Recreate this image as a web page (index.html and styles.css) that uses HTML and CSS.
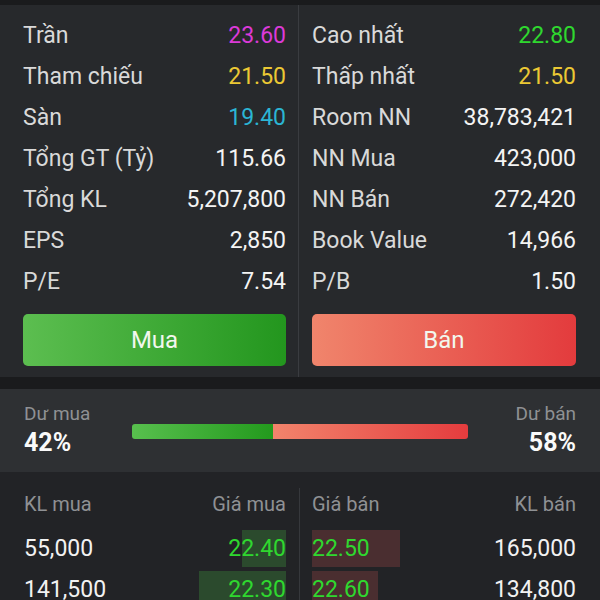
FILE: index.html
```html
<!DOCTYPE html>
<html>
<meta charset="utf-8">
<head>
  <link rel="stylesheet" href="styles.css">
</head>
<body>
  <div class="stats">
    <div class="stats-col left">
      <div class="row"><span>Trần</span><span class="ceil">23.60</span></div>
      <div class="row"><span>Tham chiếu</span><span class="ref">21.50</span></div>
      <div class="row"><span>Sàn</span><span class="floor">19.40</span></div>
      <div class="row"><span>Tổng GT (Tỷ)</span><span class="val">115.66</span></div>
      <div class="row"><span>Tổng KL</span><span class="val">5,207,800</span></div>
      <div class="row"><span>EPS</span><span class="val">2,850</span></div>
      <div class="row"><span>P/E</span><span class="val">7.54</span></div>
      <button class="btn btn-buy">Mua</button>
    </div>
    <div class="stats-col right">
      <div class="row"><span>Cao nhất</span><span class="up">22.80</span></div>
      <div class="row"><span>Thấp nhất</span><span class="ref">21.50</span></div>
      <div class="row"><span>Room NN</span><span class="val">38,783,421</span></div>
      <div class="row"><span>NN Mua</span><span class="val">423,000</span></div>
      <div class="row"><span>NN Bán</span><span class="val">272,420</span></div>
      <div class="row"><span>Book Value</span><span class="val">14,966</span></div>
      <div class="row"><span>P/B</span><span class="val">1.50</span></div>
      <button class="btn btn-sell">Bán</button>
    </div>
  </div>

  <div class="balance">
    <div class="side">
      <div class="side-label">Dư mua</div>
      <div class="side-pct">42%</div>
    </div>
    <div class="bar">
      <div class="bar-buy" style="width: 42%"></div>
      <div class="bar-sell"></div>
    </div>
    <div class="side side-right">
      <div class="side-label">Dư bán</div>
      <div class="side-pct">58%</div>
    </div>
  </div>

  <div class="book">
    <div class="book-col buy">
      <div class="book-head"><span>KL mua</span><span>Giá mua</span></div>
      <div class="book-row">
        <span class="qty">55,000</span>
        <span class="price"><i class="depth" style="width: 44px"></i><b>22.40</b></span>
      </div>
      <div class="book-row">
        <span class="qty">141,500</span>
        <span class="price"><i class="depth" style="width: 87px"></i><b>22.30</b></span>
      </div>
    </div>
    <div class="book-col sell">
      <div class="book-head"><span>Giá bán</span><span>KL bán</span></div>
      <div class="book-row">
        <span class="price"><i class="depth" style="width: 88px"></i><b>22.50</b></span>
        <span class="qty">165,000</span>
      </div>
      <div class="book-row">
        <span class="price"><i class="depth" style="width: 66px"></i><b>22.60</b></span>
        <span class="qty">134,800</span>
      </div>
    </div>
  </div>
</body>
</html>
```

FILE: styles.css
```css
body {
  margin: 0;
  padding-top: 5px;
  height: 600px;
  box-sizing: border-box;
  background-color: #1a1b1d;
  font-family: Roboto, "Noto Sans", sans-serif;
  color: #f2f2f2;
  overflow: hidden;
  display: flex;
  flex-direction: column;
}

.stats {
  display: grid;
  grid-template-columns: 299px 1fr;
  background-color: #27292c;
}

.stats-col {
  display: flex;
  flex-direction: column;
  padding: 10px 0 11px;
}

.stats-col.left {
  padding-left: 23px;
  padding-right: 12px;
  border-right: 1px solid #3a3c40;
}

.stats-col.right {
  padding-left: 13px;
  padding-right: 24px;
}

.row {
  display: flex;
  justify-content: space-between;
  align-items: center;
  height: 41px;
  font-size: 23px;
  color: #d9d9d9;
}

.row .val {
  color: #f4f4f4;
}

.ceil {
  color: #db3ad8;
}

.ref {
  color: #ebc834;
}

.floor {
  color: #2bb5d4;
}

.up {
  color: #2fd82f;
}

.btn {
  -webkit-appearance: none;
  appearance: none;
  border: none;
  border-radius: 5px;
  margin-top: 12px;
  height: 52px;
  font-family: inherit;
  font-size: 24px;
  color: #f2f7ee;
  cursor: pointer;
}

.btn-buy {
  background: linear-gradient(to right, #5cbe50, #23961e);
}

.btn-sell {
  background: linear-gradient(to right, #f0856c, #e33b3d);
}

.balance {
  margin-top: 12px;
  display: flex;
  align-items: center;
  flex: 0 0 83px;
  padding: 0 24px;
  box-sizing: border-box;
  background-color: #2e3033;
}

.side {
  width: 108px;
}

.side-right {
  text-align: right;
}

.side-label {
  font-size: 19px;
  color: #8f9194;
  line-height: 24px;
}

.side-pct {
  font-size: 25px;
  font-weight: bold;
  color: #fafafa;
  line-height: 34px;
}

.bar {
  flex: 1;
  display: flex;
  height: 15px;
  margin-top: 2px;
  border-radius: 3px;
  overflow: hidden;
}

.bar-buy {
  background: linear-gradient(to right, #58c04e, #239a1d);
}

.bar-sell {
  flex: 1;
  background: linear-gradient(to right, #f2846c, #e53c3e);
}

.book {
  flex: 1;
  display: grid;
  grid-template-columns: 300px 1fr;
  background-color: #222326;
  padding-top: 16px;
  overflow: hidden;
}

.book-col.buy {
  padding-left: 24px;
  padding-right: 13px;
  border-right: 1px solid #36383c;
}

.book-col.sell {
  padding-left: 12px;
  padding-right: 24px;
}

.book-head {
  display: flex;
  justify-content: space-between;
  align-items: center;
  height: 32px;
  font-size: 20px;
  color: #8f9194;
}

.book-row {
  display: flex;
  justify-content: space-between;
  align-items: center;
  height: 41px;
  font-size: 23px;
}

.book-head + .book-row {
  margin-top: 8px;
}

.price {
  position: relative;
  display: flex;
  align-items: center;
  align-self: stretch;
  color: #2fd82f;
}

.buy .price {
  justify-content: flex-end;
}

.price b {
  position: relative;
  font-weight: normal;
}

.depth {
  position: absolute;
  top: 2px;
  bottom: 2px;
}

.buy .depth {
  right: 0;
  background-color: #2b4a2d;
}

.sell .depth {
  left: 0;
  background-color: #4a2e30;
}
```
